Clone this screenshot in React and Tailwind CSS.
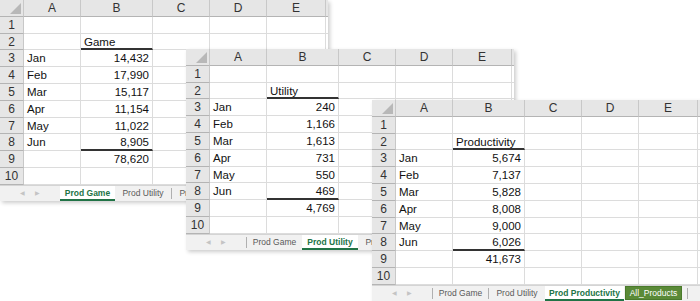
import React from "react";

const MONTHS = ["Jan", "Feb", "Mar", "Apr", "May", "Jun"];

const SHEETS = [
  {
    title: "Game",
    values: ["14,432", "17,990", "15,117", "11,154", "11,022", "8,905"],
    total: "78,620",
    active: "Prod Game",
    pos: "left-0 top-0 w-[328px]",
  },
  {
    title: "Utility",
    values: ["240", "1,166", "1,613", "731", "550", "469"],
    total: "4,769",
    active: "Prod Utility",
    pos: "left-[186px] top-[49px] w-[328px]",
  },
  {
    title: "Productivity",
    values: ["5,674", "7,137", "5,828", "8,008", "9,000", "6,026"],
    total: "41,673",
    active: "Prod Productivity",
    pos: "left-[372px] top-[100px] w-[340px]",
  },
];

const TABS = [
  { label: "Prod Game", w: "w-[55px]" },
  { label: "Prod Utility", w: "w-[56px]" },
  { label: "Prod Productivity", w: "w-[79px]" },
  { label: "All_Products", w: "w-[57px]", green: true },
];

const cellBase = "h-[16.8px] border-r border-b border-[#dcdcdc] leading-[16px] text-[11.5px] text-[#111] px-[3px] whitespace-nowrap overflow-hidden";
const hdrBase = "h-[16.8px] bg-[#e6e6e6] border-r border-b border-r-[#c8c8c8] border-b-[#b4b4b4] text-[12px] text-[#333] leading-[16px] text-center";

function Corner() {
  return (
    <div className={hdrBase + " relative"}>
      <svg className="absolute right-[2px] bottom-[2px]" width="11" height="11" viewBox="0 0 11 11">
        <polygon points="11,0 11,11 0,11" fill="#b8b8b8" />
      </svg>
    </div>
  );
}

function Row({ n, a, b, num, line }) {
  return (
    <>
      <div className={hdrBase}>{n}</div>
      <div className={cellBase}>{a}</div>
      <div
        className={
          cellBase +
          (line ? " border-b-2 border-b-[#333] leading-[15px]" : "") +
          (num ? " text-right" : "")
        }
      >
        {b}
      </div>
      <div className={cellBase}></div>
      <div className={cellBase}></div>
      <div className={cellBase}></div>
      <div className={cellBase}></div>
    </>
  );
}

function Sep() {
  return <div className="w-px h-[11px] bg-[#b0b0b0] self-center shrink-0" />;
}

function TabBar({ active }) {
  const items = [];
  TABS.forEach((t, i) => {
    const isActive = t.label === active;
    const prev = TABS[i - 1];
    const prevActive = prev && (prev.label === active || prev.green);
    if (!isActive && !t.green && !prevActive) items.push(<Sep key={"s" + i} />);
    if (t.green) {
      items.push(
        <div key={i} className="flex items-center pl-px pr-[5px] h-full shrink-0">
          <div className="w-[57px] h-[14px] bg-[#5a8a37] text-white text-[8.5px] leading-[13px] text-center border border-[#4a7a2b]">
            {t.label}
          </div>
        </div>
      );
      items.push(<Sep key={"e" + i} />);
      return;
    }
    items.push(
      <div
        key={i}
        className={
          t.w +
          " h-full shrink-0 text-center text-[8.5px] leading-[15px] whitespace-nowrap " +
          (isActive
            ? "bg-white text-[#217346] font-bold border-b-2 border-[#217346]"
            : "text-[#595959]")
        }
      >
        {t.label}
      </div>
    );
  });
  return (
    <div className="flex h-[16px] overflow-hidden bg-[#f1f1f1] border-t border-[#d4d4d4]">
      <div className="w-[60px] shrink-0 flex items-center justify-center gap-[10px] text-[6px] text-[#c4c4c4]">
        <span>◀</span>
        <span>▶</span>
      </div>
      {items}
    </div>
  );
}

function Sheet({ title, values, total, active, pos }) {
  return (
    <div className={"absolute bg-white overflow-hidden shadow-[2px_2px_4px_rgba(0,0,0,0.2)] " + pos}>
      <div className="grid grid-cols-[24px_57px_72px_57px_57px_59px_30px]">
        <Corner />
        {["A", "B", "C", "D", "E", ""].map((c) => (
          <div key={c} className={hdrBase}>
            {c}
          </div>
        ))}
        <Row n="1" />
        <Row n="2" b={title} line />
        {MONTHS.map((m, i) => (
          <Row key={m} n={String(i + 3)} a={m} b={values[i]} num line={i === 5} />
        ))}
        <Row n="9" b={total} num />
        <Row n="10" />
      </div>
      <TabBar active={active} />
    </div>
  );
}

export default function App() {
  return (
    <div
      className="relative w-[700px] h-[301px] overflow-hidden bg-white"
      style={{ fontFamily: '"Liberation Sans", Arial, sans-serif' }}
    >
      {SHEETS.map((s) => (
        <Sheet key={s.title} {...s} />
      ))}
    </div>
  );
}
